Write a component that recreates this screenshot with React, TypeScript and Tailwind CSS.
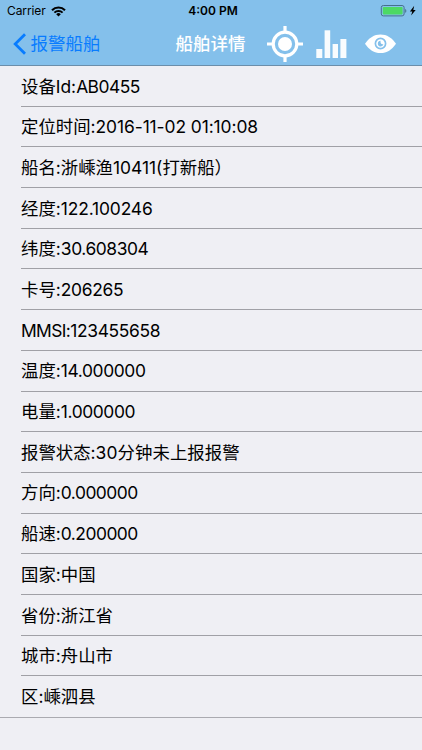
import React from 'react';

interface Row {
  label: string;
  value: string;
  tracking?: string;
}

const rows: Row[] = [
  { label: '设备Id', value: 'AB0455', tracking: 'tracking-[-0.5px]' },
  { label: '定位时间', value: '2016-11-02 01:10:08', tracking: 'tracking-[-0.08px]' },
  { label: '船名', value: '浙嵊渔10411(打新船）' },
  { label: '经度', value: '122.100246', tracking: 'tracking-[-0.14px]' },
  { label: '纬度', value: '30.608304', tracking: 'tracking-[-0.42px]' },
  { label: '卡号', value: '206265', tracking: 'tracking-[-0.3px]' },
  { label: 'MMSI', value: '123455658', tracking: 'tracking-[-0.34px]' },
  { label: '温度', value: '14.000000', tracking: 'tracking-[-0.38px]' },
  { label: '电量', value: '1.000000', tracking: 'tracking-[-0.4px]' },
  { label: '报警状态', value: '30分钟未上报报警', tracking: 'tracking-[0.08px]' },
  { label: '方向', value: '0.000000', tracking: 'tracking-[-0.5px]' },
  { label: '船速', value: '0.200000', tracking: 'tracking-[-0.5px]' },
  { label: '国家', value: '中国' },
  { label: '省份', value: '浙江省' },
  { label: '城市', value: '舟山市' },
  { label: '区', value: '嵊泗县' },
];

function WifiIcon() {
  return (
    <svg className="ml-[5px] h-[11px] w-[15px]" viewBox="0 0 15 11" fill="none" stroke="#000">
      <path d="M1 4.2a9.2 9.2 0 0 1 13 0" strokeWidth="2.1" />
      <path d="M3.4 6.7a5.8 5.8 0 0 1 8.2 0" strokeWidth="1.9" />
      <path d="M7.5 10.6 5.2 8.3a3.2 3.2 0 0 1 4.6 0Z" fill="#000" stroke="none" />
    </svg>
  );
}

function BatteryIcon() {
  return (
    <svg className="h-[12px] w-[38px]" viewBox="0 0 38 12">
      <rect x="2.3" y="0.5" width="22.8" height="10.4" rx="2" fill="none" stroke="#45708c" />
      <rect x="3.8" y="2" width="19.8" height="7.4" rx="0.8" fill="#4cd964" />
      <path d="M26.2 4v3.8c.8-.4 1.1-1 1.1-1.9S27 4.4 26.2 4Z" fill="#45708c" />
      <path d="m35.2.8-4.3 5.6h2.4l-1.2 4.2 4.6-5.7h-2.4Z" fill="#000" />
    </svg>
  );
}

function TargetIcon() {
  return (
    <svg className="h-[36px] w-[36px]" viewBox="0 0 36 36" fill="none" stroke="#fff">
      <circle cx="18" cy="18" r="11.8" strokeWidth="3.2" />
      <circle cx="18" cy="18" r="7" fill="#fff" stroke="none" />
      <path d="M18 0v7M18 29v7M0 18h7M29 18h7" strokeWidth="3.2" />
    </svg>
  );
}

function BarsIcon() {
  return (
    <svg className="ml-[13px] h-[28px] w-[31px]" viewBox="0 0 31 28" fill="#fff">
      <rect x="0.3" y="19" width="6" height="9" opacity="0.94" />
      <rect x="8.6" y="0.3" width="5.6" height="27.7" opacity="0.94" />
      <rect x="16.6" y="14" width="5.4" height="14" opacity="0.94" />
      <rect x="24.4" y="9" width="6" height="19" opacity="0.94" />
    </svg>
  );
}

function EyeIcon() {
  return (
    <svg className="ml-[18px] h-[20px] w-[31px]" viewBox="0 0 31 20">
      <path d="M0 9.7C4 3.7 9.2.4 15.5.4S27 3.7 31 9.7c-4 6-9.2 9.3-15.5 9.3S4 15.7 0 9.7Z" fill="#fff" />
      <circle cx="15.5" cy="9.5" r="5.1" fill="none" stroke="#84c0eb" strokeWidth="1.7" />
      <path d="M15.6 6.8a2.8 2.8 0 1 0 2.8 3.2c-1.8.7-3.4-.8-2.8-3.2Z" fill="#84c0eb" />
    </svg>
  );
}

export default function App() {
  return (
    <div className="h-[750px] w-[422px] overflow-hidden bg-[#efeff4] font-['Inter','Noto_Sans_CJK_SC',sans-serif] text-black">
      <header className="h-[66px] border-b border-[#6b8eaa] bg-[#84c0eb]">
        <div className="grid h-[22px] grid-cols-3 items-center pr-[5px] pl-[7px] text-[12px] leading-[22px]">
          <div className="flex items-center">
            <span className="tracking-[-0.1px]">Carrier</span>
            <WifiIcon />
          </div>
          <span className="pl-[2px] text-center font-semibold">4:00 PM</span>
          <div className="flex justify-end">
            <BatteryIcon />
          </div>
        </div>
        <nav className="flex h-[43px] items-center pl-[13px] text-[17.5px]">
          <svg className="h-[22px] w-[13px]" viewBox="0 0 13 22" fill="none" stroke="#087cff" strokeWidth="2.8">
            <path d="M12 1.2 2.2 11 12 20.8" />
          </svg>
          <span className="ml-[4.5px] w-[144.5px] pt-px text-[#087cff]">报警船舶</span>
          <span className="w-[92px] pt-px pl-[0.5px] font-medium text-white">船舶详情</span>
          <TargetIcon />
          <BarsIcon />
          <EyeIcon />
        </nav>
      </header>
      <ul className="h-[652px] border-b border-[#aaaab0]">
        {rows.map((row) => (
          <li
            key={row.label}
            className="ml-[21px] flex h-[40.7px] items-center border-b border-[#a0a0a6] pt-[1.6px] text-[17.4px] whitespace-pre last:border-b-0"
          >
            <span className={row.label === 'MMSI' ? 'tracking-[-0.6px]' : ''}>{row.label}:</span>
            <span className={row.tracking}>{row.value}</span>
          </li>
        ))}
      </ul>
    </div>
  );
}
